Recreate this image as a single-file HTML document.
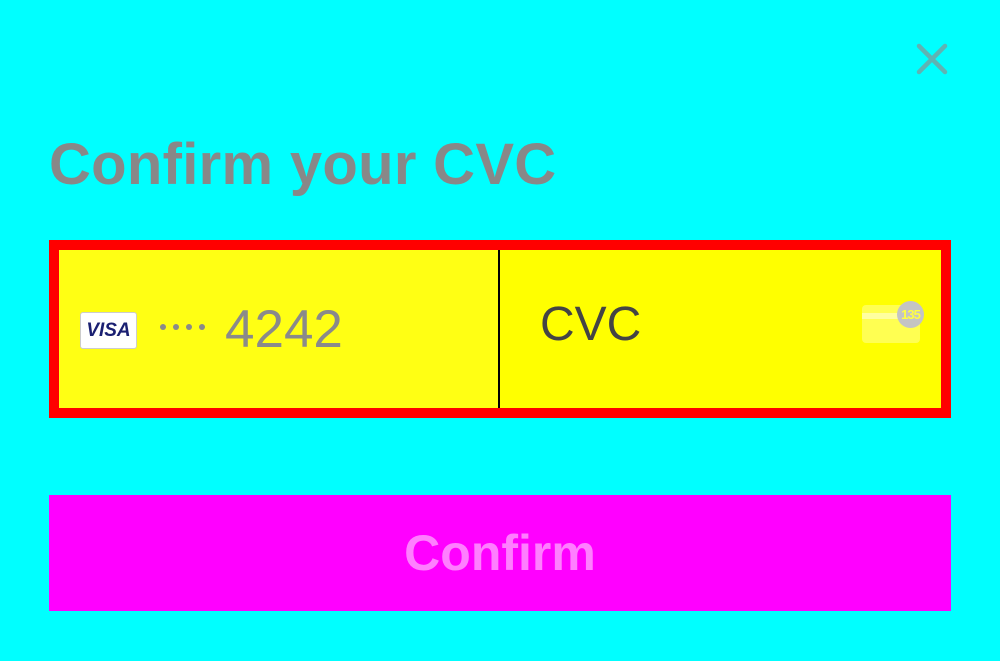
<!DOCTYPE html>
<html><head><style>
html,body{margin:0;padding:0}
body{width:1000px;height:661px;background:#00ffff;position:relative;overflow:hidden;font-family:"Liberation Sans",Arial,sans-serif}
.a{position:absolute;white-space:nowrap}
</style></head><body>
<svg class="a" style="left:912px;top:40px" width="40" height="40" viewBox="0 0 40 40"><path d="M7 6 L33 32 M33 6 L7 32" stroke="#5fb3b3" stroke-width="4.5" stroke-linecap="round" fill="none"/></svg>
<div class="a" style="left:49px;top:130px;font-size:58px;line-height:70px;font-weight:bold;color:#888888;letter-spacing:0.3px">Confirm your CVC</div>
<div class="a" style="left:49px;top:240px;width:882px;height:158px;border:10px solid #ff0000;background:#ffff14"></div>
<div class="a" style="left:498px;top:250px;width:2px;height:158px;background:#000"></div>
<div class="a" style="left:500px;top:250px;width:441px;height:158px;background:#ffff00"></div>
<div class="a" style="left:80px;top:312px;width:57px;height:37px;background:#fff;border:1px solid #ccc;border-radius:3px;box-sizing:border-box;text-align:center;font:italic bold 19px/35px 'Liberation Sans',sans-serif;color:#1a1f71">VISA</div>
<div class="a" style="left:158px;top:322px;width:50px;height:10px">
<span style="position:absolute;left:2px;top:2px;width:6px;height:6px;border-radius:3px;background:#8a8a8a"></span>
<span style="position:absolute;left:15px;top:2px;width:6px;height:6px;border-radius:3px;background:#8a8a8a"></span>
<span style="position:absolute;left:28px;top:2px;width:6px;height:6px;border-radius:3px;background:#8a8a8a"></span>
<span style="position:absolute;left:41px;top:2px;width:6px;height:6px;border-radius:3px;background:#8a8a8a"></span>
</div>
<div class="a" style="left:225px;top:300px;font-size:53px;line-height:60px;color:#8a8a8a">4242</div>
<div class="a" style="left:540px;top:297px;font-size:48px;line-height:56px;color:#444">CVC</div>
<div class="a" style="left:862px;top:305px;width:58px;height:38px;border-radius:4px;background:#ffff66;opacity:.8"></div>
<div class="a" style="left:862px;top:313px;width:50px;height:6px;background:#ffffa0"></div>
<div class="a" style="left:897px;top:301px;width:27px;height:27px;border-radius:50%;background:#c4c4c4;color:#ffff44;font:bold 13px/27px 'Liberation Sans',sans-serif;text-align:center;letter-spacing:-1px">135</div>
<div class="a" style="left:49px;top:495px;width:902px;height:116px;background:#ff00ff"></div>
<div class="a" style="left:49px;top:523px;width:902px;text-align:center;font-size:50px;line-height:60px;font-weight:bold;color:#ff7fff">Confirm</div>
</body></html>
